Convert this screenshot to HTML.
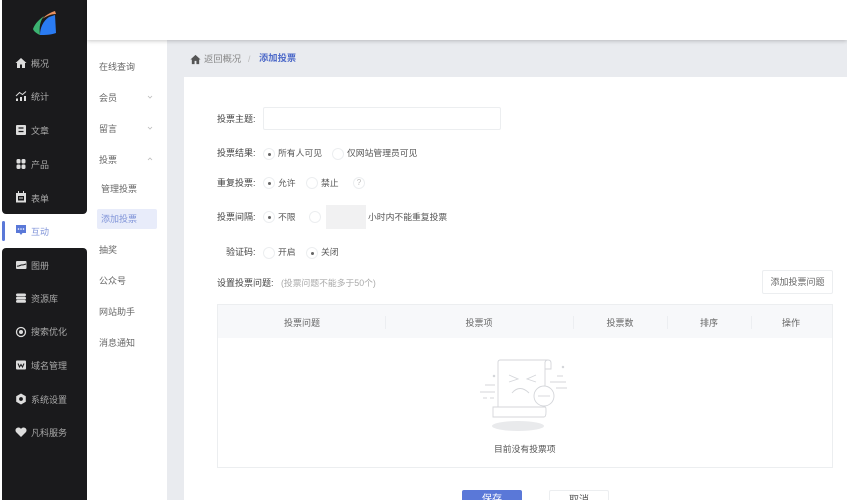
<!DOCTYPE html>
<html lang="zh"><head><meta charset="utf-8"><style>
html,body{margin:0;padding:0;width:847px;height:500px;overflow:hidden}
body{position:relative;background:#fff;font-family:"Liberation Sans","Noto Sans CJK SC",sans-serif;font-size:9px;color:#555}
#w{position:absolute;left:0;top:0;width:847px;height:500px;overflow:hidden;filter:blur(.3px)}
.a{position:absolute;white-space:nowrap}
.bk{position:absolute;left:2px;width:85px;background:#1a1a1c}
.m{position:absolute;left:31px;color:#aaa;font-size:9px;line-height:14px;white-space:nowrap}
.ic{position:absolute;left:15px;width:12px;height:12px}
.s{position:absolute;left:99px;color:#666;font-size:9px;line-height:14px;white-space:nowrap}
.l{position:absolute;color:#444;font-size:9px;line-height:14px;white-space:nowrap}
.t{position:absolute;color:#555;font-size:8.800px;line-height:14px;white-space:nowrap}
.r{position:absolute;width:10px;height:10px;border:1px solid #eceef0;border-radius:50%;background:#fff}
.r.on:after{content:"";position:absolute;left:3.500px;top:3.500px;width:3px;height:3px;border-radius:50%;background:#666}
.th{position:absolute;top:316px;color:#666;font-size:9px;line-height:14px;white-space:nowrap;transform:translateX(-50%)}
.sep{position:absolute;top:316px;width:1px;height:13px;background:#eceef1}
</style></head><body><div id="w">
<div class="a" style="left:87px;top:0;width:760px;height:40px;background:#fff;box-shadow:0 1px 4px rgba(0,0,0,.22);z-index:2"></div>
<div class="a" style="left:167px;top:40px;width:680px;height:460px;background:#e9ebef"></div>
<div class="a" style="left:184px;top:77px;width:663px;height:423px;background:#fff"></div>

<div class="bk" style="top:0;height:214px;border-radius:0 0 4px 4px"></div>
<div class="bk" style="top:248px;height:252px;border-radius:4px 4px 0 0"></div>
<div class="a" style="left:2px;top:221px;width:3px;height:20px;background:#5a78d8;border-radius:2px"></div>
<svg class="a" style="left:32px;top:10px" width="25" height="26" viewBox="0 0 25 26"><path d="M8 25C6 24 2 22 1 19C3 13 8 9 12 6C8 11 7 17 8 25Z" fill="#3cb371"/><path d="M10 9C13 6 17 3 23 1L24 4C19 4 15 6 10 9Z" fill="#e8905f"/><path d="M8 25C8 18 11 11 17 7L23 5L24 23C19 25 13 25 8 25Z" fill="#2a7bf2"/></svg>

<svg class="ic" style="top:57px" viewBox="0 0 12 12"><path d="M6 1L.5 6H2V11H5V7.500H7V11H10V6H11.500Z" fill="#ddd"/></svg><div class="m" style="top:57px">概况</div>
<svg class="ic" style="top:90px" viewBox="0 0 12 12"><path d="M1 11V8.500H3V11ZM5 11V7H7V11ZM9 11V6H11V11Z" fill="#ddd"/><path d="M1 6L4.500 2.500L7.500 4.500L11 1.500" fill="none" stroke="#ddd" stroke-width="1"/></svg><div class="m" style="top:90px">统计</div>
<svg class="ic" style="top:124px" viewBox="0 0 12 12"><path d="M2 1H10Q11 1 11 2V10Q11 11 10 11H2Q1 11 1 10V2Q1 1 2 1Z" fill="#ddd"/><path d="M3.500 4H8.500M3.500 7.500H8.500" stroke="#1a1a1c" stroke-width="1.200"/></svg><div class="m" style="top:124px">文章</div>
<svg class="ic" style="top:158px" viewBox="0 0 12 12"><g fill="#ddd"><rect x="1.500" y="1" width="4" height="4.500" rx="1.500"/><rect x="6.500" y="1" width="4" height="4.500" rx="1.500"/><rect x="1.500" y="6.500" width="4" height="4.500" rx="1.500"/><rect x="6.500" y="6.500" width="4" height="4.500" rx="1.500"/></g></svg><div class="m" style="top:158px">产品</div>
<svg class="ic" style="top:191px" viewBox="0 0 12 12"><path d="M3 0H4V2H8V0H9V2H11V11.500H1V2H3Z" fill="#ddd"/><path d="M3 5H9V9.500H3Z" fill="#1a1a1c"/><path d="M4 7H8" stroke="#ddd"/></svg><div class="m" style="top:192px">表单</div>
<svg class="ic" style="top:224px" viewBox="0 0 12 12"><path d="M1 1H11V9H7.500L6 11L4.500 9H1Z" fill="#5a78d8"/><g fill="#fff"><circle cx="3.500" cy="5" r=".8"/><circle cx="6" cy="5" r=".8"/><circle cx="8.500" cy="5" r=".8"/></g></svg><div class="m" style="top:225px;color:#7f93d8">互动</div>
<svg class="ic" style="top:259px" viewBox="0 0 12 12"><rect x="1" y="2" width="10.500" height="8" rx="1" fill="#ddd"/><path d="M2 7C4 8 6 5 8 6L11 5" stroke="#1a1a1c" fill="none"/></svg><div class="m" style="top:259px">图册</div>
<svg class="ic" style="top:292px" viewBox="0 0 12 12"><g fill="#ddd"><rect x="1" y="1.500" width="10" height="2.800" rx="1.400"/><rect x="1" y="4.800" width="10" height="2.800" rx="1.400"/><rect x="1" y="8" width="10" height="2.800" rx="1.400"/></g></svg><div class="m" style="top:292px">资源库</div>
<svg class="ic" style="top:326px" viewBox="0 0 12 12"><circle cx="6" cy="6" r="4.500" fill="none" stroke="#ddd" stroke-width="1.300"/><circle cx="6" cy="6" r="2" fill="#ddd"/></svg><div class="m" style="top:325px">搜索优化</div>
<svg class="ic" style="top:359px" viewBox="0 0 12 12"><rect x="1" y="1.500" width="10" height="9" rx="1" fill="#ddd"/><path d="M3 4.500L4.500 8L6 5.500L7.500 8L9 4.500" stroke="#1a1a1c" fill="none"/></svg><div class="m" style="top:359px">域名管理</div>
<svg class="ic" style="top:393px" viewBox="0 0 12 12"><path d="M6 .5L10.800 3.200V8.800L6 11.500L1.200 8.800V3.200Z" fill="#ddd"/><circle cx="6" cy="6" r="1.900" fill="#1a1a1c"/></svg><div class="m" style="top:393px">系统设置</div>
<svg class="ic" style="top:426px" viewBox="0 0 12 12"><path d="M6 11L1 6C-.5 3.500 1.500 1.500 3.500 1.500C4.800 1.500 5.500 2.200 6 3C6.500 2.200 7.200 1.500 8.500 1.500C10.500 1.500 12.500 3.500 11 6Z" fill="#ddd"/></svg><div class="m" style="top:426px">凡科服务</div>

<div class="s" style="top:60px">在线查询</div>
<div class="s" style="top:91px">会员</div>
<div class="s" style="top:122px">留言</div>
<div class="s" style="top:153px">投票</div>
<svg class="a" style="left:147px;top:95px" width="6" height="5"><path d="M1 1L3 3L5 1" fill="none" stroke="#bbb" stroke-width=".8"/></svg>
<svg class="a" style="left:147px;top:126px" width="6" height="5"><path d="M1 1L3 3L5 1" fill="none" stroke="#bbb" stroke-width=".8"/></svg>
<svg class="a" style="left:147px;top:157px" width="6" height="5"><path d="M1 3L3 1L5 3" fill="none" stroke="#bbb" stroke-width=".8"/></svg>
<div class="s" style="top:182px;left:101px">管理投票</div>
<div class="a" style="left:97px;top:209px;width:60px;height:20px;background:#e8ecfa;border-radius:2px"></div>
<div class="s" style="top:212px;left:101px;color:#7f93d8">添加投票</div>
<div class="s" style="top:243px">抽奖</div>
<div class="s" style="top:274px">公众号</div>
<div class="s" style="top:305px">网站助手</div>
<div class="s" style="top:336px">消息通知</div>

<svg class="a" style="left:190px;top:54px" width="11" height="11" viewBox="0 0 12 12"><path d="M6 1L.5 6H2V11H5V7.500H7V11H10V6H11.500Z" fill="#555"/></svg>
<div class="t" style="left:204px;top:52px;color:#888;font-size:9.300px">返回概况</div>
<div class="t" style="left:248px;top:52px;color:#bbb">/</div>
<div class="t" style="left:259px;top:51px;color:#4f6bc9;font-weight:bold;font-size:9.300px">添加投票</div>

<div class="l" style="left:217px;top:112px">投票主题:</div>
<div class="a" style="left:263px;top:107px;width:236px;height:21px;border:1px solid #eceef0;border-radius:2px;background:#fff"></div>

<div class="l" style="left:217px;top:146px">投票结果:</div>
<div class="r on" style="left:263px;top:148px"></div><div class="t" style="left:278px;top:146px">所有人可见</div>
<div class="r" style="left:332px;top:148px"></div><div class="t" style="left:347px;top:146px">仅网站管理员可见</div>

<div class="l" style="left:217px;top:176px">重复投票:</div>
<div class="r on" style="left:263px;top:177px"></div><div class="t" style="left:278px;top:176px">允许</div>
<div class="r" style="left:306px;top:177px"></div><div class="t" style="left:321px;top:176px">禁止</div>
<div class="a" style="left:353px;top:177px;width:10px;height:10px;border:1px solid #eceef0;border-radius:50%;color:#bbb;font-size:8px;line-height:10px;text-align:center">?</div>

<div class="l" style="left:217px;top:210px">投票间隔:</div>
<div class="r on" style="left:263px;top:211px"></div><div class="t" style="left:278px;top:210px">不限</div>
<div class="r" style="left:309px;top:211px"></div>
<div class="a" style="left:326px;top:205px;width:40px;height:24px;background:#f1f1f2"></div>
<div class="t" style="left:368px;top:210px">小时内不能重复投票</div>

<div class="l" style="left:226px;top:245px">验证码:</div>
<div class="r" style="left:263px;top:247px"></div><div class="t" style="left:278px;top:245px">开启</div>
<div class="r on" style="left:306px;top:247px"></div><div class="t" style="left:321px;top:245px">关闭</div>

<div class="l" style="left:217px;top:276px">设置投票问题:</div>
<div class="t" style="left:281px;top:276px;color:#aaa">(投票问题不能多于50个)</div>
<div class="a" style="left:762px;top:270px;width:69px;height:22px;border:1px solid #eceef0;border-radius:2px;text-align:center;line-height:22px;color:#666;background:#fff">添加投票问题</div>

<div class="a" style="left:217px;top:304px;width:614px;height:162px;border:1px solid #eceef0"></div>
<div class="a" style="left:218px;top:305px;width:614px;height:33px;background:#f7f8fa"></div>
<div class="th" style="left:302px">投票问题</div>
<div class="th" style="left:479px">投票项</div>
<div class="th" style="left:620px">投票数</div>
<div class="th" style="left:709px">排序</div>
<div class="th" style="left:791px">操作</div>
<div class="sep" style="left:385px"></div><div class="sep" style="left:573px"></div><div class="sep" style="left:667px"></div><div class="sep" style="left:751px"></div>

<svg class="a" style="left:478px;top:358px" width="92" height="74" viewBox="0 0 92 74" fill="none" stroke="#d4d6da" stroke-width=".9">
<ellipse cx="40" cy="68" rx="26" ry="5" fill="#e9eaec" stroke="none"/>
<path d="M20 49V4C20 3 21 2 22 2H70C72 2 73 3 73 5V11H67M67 5C67 3 68 2 70 2M67 4V49"/>
<path d="M15 49H67C68 49 68 50 68 54C68 58 67 59 66 59H15Z"/>
<circle cx="66" cy="38" r="10" fill="#fff"/><path d="M60 38H72"/>
<path d="M31 17L40 21L31 24M58 17L49 21L58 24M34 35C39 29 45 29 51 35"/>
<path d="M7 27H17M2 34H17M5 40H9M12 40H16M79 18H85M72 24H88M78 30H89"/>
<circle cx="16" cy="18" r=".8" fill="#d4d6da"/><circle cx="85" cy="9" r=".8" fill="#d4d6da"/>
</svg>
<div class="t" style="left:494px;top:442px">目前没有投票项</div>

<div class="a" style="left:462px;top:490px;width:60px;height:24px;background:#5a78d8;border-radius:2px;color:#fff;text-align:center;line-height:20px;font-size:10px">保存</div>
<div class="a" style="left:549px;top:490px;width:58px;height:24px;border:1px solid #eceef0;border-radius:2px;text-align:center;line-height:20px;font-size:10px;background:#fff">取消</div>
</div></body></html>
